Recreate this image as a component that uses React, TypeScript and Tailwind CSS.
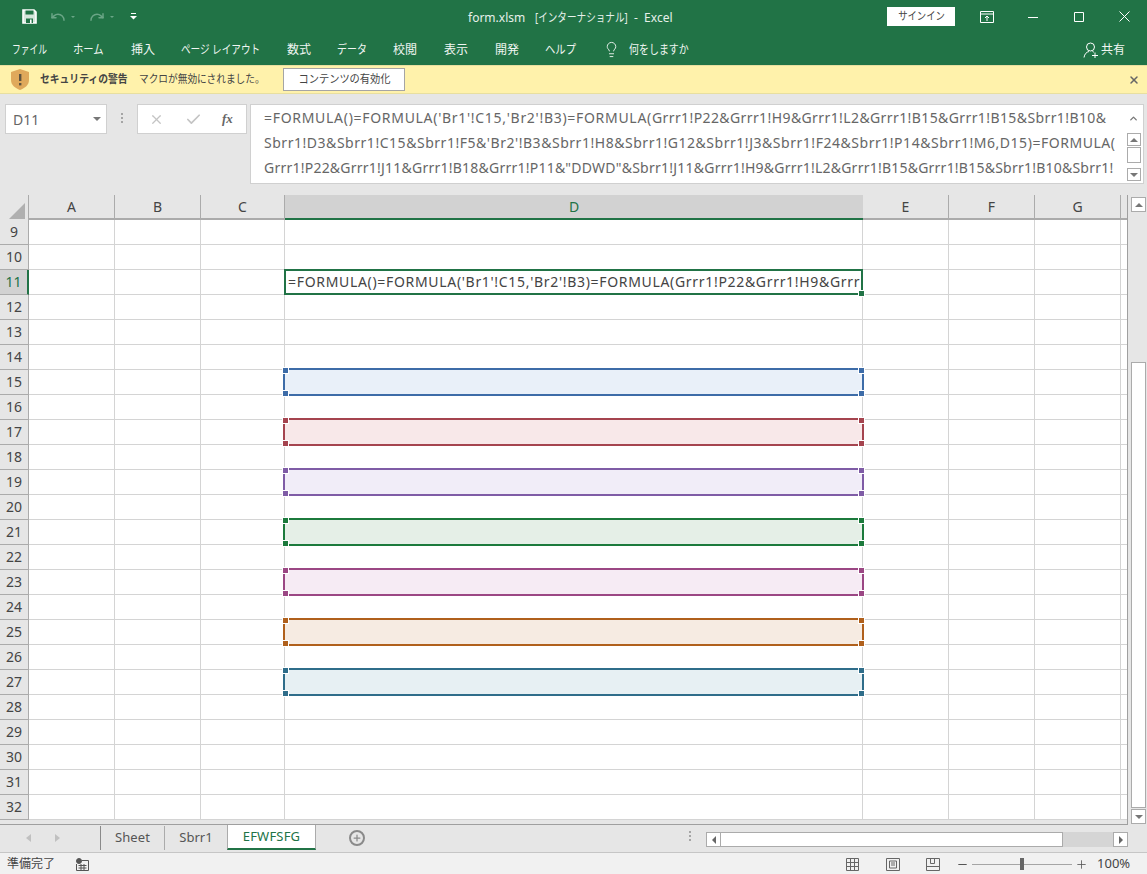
import { Minus, Plus, X, ChevronUp, Check, Undo, Redo, Lightbulb } from "lucide-react";

const font = "font-['Noto_Sans','Noto_Sans_CJK_JP',sans-serif]";

// kana in the reference's UI font runs narrower than in Noto, so labels get squeezed
function Narrow({ text, w, scale }: { text: string; w: string; scale: string }) {
  return (
    <span className={`inline-block whitespace-nowrap ${w}`}>
      <span className={`inline-block origin-left ${scale}`}>{text}</span>
    </span>
  );
}

const menus = [
  { label: "ファイル", w: "w-[61px]", inner: "w-[35px]", scale: "scale-x-[0.73]" },
  { label: "ホーム", w: "w-[58px]", inner: "w-[31px]", scale: "scale-x-[0.86]" },
  { label: "挿入", w: "w-[50px]", inner: "w-[24px]", scale: "scale-x-100" },
  { label: "ページ レイアウト", w: "w-[106px]", inner: "w-[79px]", scale: "scale-x-[0.8]" },
  { label: "数式", w: "w-[50px]", inner: "w-[24px]", scale: "scale-x-100" },
  { label: "データ", w: "w-[56px]", inner: "w-[30px]", scale: "scale-x-[0.83]" },
  { label: "校閲", w: "w-[51px]", inner: "w-[24px]", scale: "scale-x-100" },
  { label: "表示", w: "w-[51px]", inner: "w-[24px]", scale: "scale-x-100" },
  { label: "開発", w: "w-[50px]", inner: "w-[24px]", scale: "scale-x-100" },
  { label: "ヘルプ", w: "w-[56px]", inner: "w-[31px]", scale: "scale-x-[0.86]" },
];

const bands: Record<number, { border: string; fill: string; handle: string }> = {
  15: { border: "border-[#3d6ca8]", fill: "bg-[#e9f0f9]", handle: "bg-[#3d6ca8]" },
  17: { border: "border-[#a5444f]", fill: "bg-[#f8e8e9]", handle: "bg-[#a5444f]" },
  19: { border: "border-[#7f5ca6]", fill: "bg-[#f1edf8]", handle: "bg-[#7f5ca6]" },
  21: { border: "border-[#1c7a3c]", fill: "bg-[#e5efe7]", handle: "bg-[#1c7a3c]" },
  23: { border: "border-[#9b4784]", fill: "bg-[#f6ebf4]", handle: "bg-[#9b4784]" },
  25: { border: "border-[#b0601c]", fill: "bg-[#f6ebe2]", handle: "bg-[#b0601c]" },
  27: { border: "border-[#2f6d8a]", fill: "bg-[#e7f0f3]", handle: "bg-[#2f6d8a]" },
};

const rowNumbers = Array.from({ length: 24 }, (_, i) => i + 9);

const cols = [
  { name: "A", w: "w-[86px]" },
  { name: "B", w: "w-[86px]" },
  { name: "C", w: "w-[84px]" },
  { name: "D", w: "w-[578px]" },
  { name: "E", w: "w-[86px]" },
  { name: "F", w: "w-[86px]" },
  { name: "G", w: "w-[86px]" },
];

function Handle({ className, color }: { className: string; color: string }) {
  return <span className={`absolute h-[7px] w-[7px] border border-white ${color} ${className}`} />;
}

function Band({ row }: { row: number }) {
  const b = bands[row];
  return (
    <div className={`absolute left-[-2px] top-[-2px] z-10 h-[28px] w-[581px] border-2 ${b.border} ${b.fill}`}>
      <Handle color={b.handle} className="left-[-3px] top-[-3px]" />
      <Handle color={b.handle} className="right-[-3px] top-[-3px]" />
      <Handle color={b.handle} className="bottom-[-3px] left-[-3px]" />
      <Handle color={b.handle} className="bottom-[-3px] right-[-3px]" />
    </div>
  );
}

function TitleBar() {
  return (
    <div className="flex h-[33px] items-center bg-[#217346] text-white">
      <div className="flex w-[440px] items-center pl-[22px]">
        <svg width="15" height="15" viewBox="0 0 15 15" fill="none" stroke="#fff" strokeWidth="1.6">
          <path d="M1 1h11l2 2v11H1z" fill="#d5e6dc" stroke="#fff" />
          <path d="M3.5 1.5h8v4h-8z" fill="#217346" stroke="none" />
          <path d="M4 9.5h7V14H4z" fill="#217346" stroke="none" />
          <path d="M8 10.5h1.6V14H8z" fill="#fff" stroke="none" />
        </svg>
        <Undo size={16} strokeWidth={2.2} className="ml-[13px] text-[#6aa586]" />
        <span className="ml-[5px] h-0 w-0 border-x-[2px] border-t-[2px] border-x-transparent border-t-[#6aa586]" />
        <Redo size={16} strokeWidth={2.2} className="ml-[14px] text-[#6aa586]" />
        <span className="ml-[5px] h-0 w-0 border-x-[2px] border-t-[2px] border-x-transparent border-t-[#6aa586]" />
        <svg width="7" height="7" viewBox="0 0 7 7" className="ml-[16px]" fill="#fff">
          <path d="M1 0h5v1H1z" />
          <path d="M0 3h7L3.5 6.5z" />
        </svg>
      </div>
      <div className="flex w-[447px] pl-[28px] pt-[2px] text-[12px] text-[#e6f0ea]">
        <span className="w-[67px]">form.xlsm</span>
        <Narrow text="[インターナショナル]" w="w-[99px]" scale="scale-x-[0.8]" />
        <span>-&nbsp;&nbsp;Excel</span>
      </div>
      <div className="flex h-[19px] w-[68px] items-center justify-center bg-white text-[11px] text-[#444]">
        <span className="scale-x-[0.85]">サインイン</span>
      </div>
      <svg width="14" height="12" viewBox="0 0 14 12" fill="none" stroke="#fff" className="ml-[25px]">
        <path d="M.5.5h13v11H.5zM.5 3h13" />
        <path d="M7 10V5M5 7l2-2 2 2" />
      </svg>
      <svg width="10" height="10" viewBox="0 0 10 10" stroke="#fff" className="ml-[34px]">
        <path d="M0 5.5h10" />
      </svg>
      <svg width="10" height="10" viewBox="0 0 10 10" fill="none" stroke="#fff" className="ml-[36px]">
        <path d="M.5.5h9v9h-9z" />
      </svg>
      <svg width="11" height="11" viewBox="0 0 11 11" stroke="#fff" className="ml-[35px]">
        <path d="M.5.5l10 10M10.5.5l-10 10" />
      </svg>
    </div>
  );
}

function MenuBar() {
  return (
    <div className="flex h-[32px] items-center bg-[#217346] pl-[12px] pt-[1px] text-[12px] text-[#f0f6f2]">
      {menus.map((m) => (
        <div key={m.label} className={m.w}>
          <Narrow text={m.label} w={m.inner} scale={m.scale} />
        </div>
      ))}
      <Lightbulb size={17} strokeWidth={1.3} className="ml-[2px]" />
      <div className="ml-[9px]">
        <Narrow text="何をしますか" w="w-[60px]" scale="scale-x-[0.83]" />
      </div>
      <div className="ml-auto flex items-center pr-[22px]">
        <svg width="16" height="16" viewBox="0 0 16 16" fill="none" stroke="#fff">
          <circle cx="7.5" cy="5" r="4" />
          <path d="M1 15.5c.5-3.5 2.5-5.5 5-6M9.5 9.5c.5.2 1 .4 1.5.8M9 13.5h6M12 10.5v6" />
        </svg>
        <span className="ml-[2px]">共有</span>
      </div>
    </div>
  );
}

function MessageBar() {
  return (
    <div className="flex h-[29px] items-center border-y border-[#e8dfa0] bg-[#fff2ab] text-[11px] text-[#444]">
      <svg width="20" height="21" viewBox="0 0 20 21" className="ml-[10px]">
        <path d="M10 0l9 3v8c0 5-4 8-9 10C5 19 1 16 1 11V3z" fill="#dfa95b" />
        <rect x="9" y="5" width="2.4" height="7" fill="#5d5340" />
        <rect x="9" y="14" width="2.4" height="2.4" fill="#5d5340" />
      </svg>
      <span className="ml-[10px] font-bold">
        <Narrow text="セキュリティの警告" w="w-[88px]" scale="scale-x-[0.89]" />
      </span>
      <span className="ml-[11px]">
        <Narrow text="マクロが無効にされました。" w="w-[121px]" scale="scale-x-[0.88]" />
      </span>
      <div className="ml-[23px] flex h-[23px] w-[122px] items-center justify-center border border-[#a5a5a5] bg-white">
        <span className="scale-x-[0.93]">コンテンツの有効化</span>
      </div>
      <X size={12} strokeWidth={3} className="ml-auto mr-[7px] text-[#666]" />
    </div>
  );
}

function FormulaBar() {
  return (
    <div className="flex h-[101px] items-start bg-[#e6e6e6] pt-[10px]">
      <div className="ml-[5px] flex h-[30px] w-[102px] items-center justify-between border border-[#d0d0d0] bg-white pl-[7px] pr-[5px] text-[14px] text-[#666]">
        <span>D11</span>
        <span className="h-0 w-0 border-x-[4px] border-t-[4px] border-x-transparent border-t-[#777]" />
      </div>
      <div className="ml-[14px] mt-[9px] flex flex-col gap-[2px]">
        <span className="h-[2px] w-[2px] bg-[#a5a5a5]" />
        <span className="h-[2px] w-[2px] bg-[#a5a5a5]" />
        <span className="h-[2px] w-[2px] bg-[#a5a5a5]" />
      </div>
      <div className="ml-[14px] flex h-[30px] w-[110px] items-center border border-[#d0d0d0] bg-white text-[#c4c4c4]">
        <X size={15} strokeWidth={2} className="ml-[11px]" />
        <Check size={17} strokeWidth={2.4} className="ml-[21px]" />
        <span className="ml-[20px] font-['Liberation_Serif',serif] text-[13px] font-bold italic text-[#666]">fx</span>
      </div>
      <div className="ml-[3px] flex h-[80px] w-[894px] border border-[#d0d0d0] bg-white">
        <div className="w-[870px] shrink-0 overflow-hidden pl-[13px] text-[14px] leading-[25px] whitespace-nowrap text-[#666]">
          <div className="tracking-[0.4px]">
            <span className="tracking-[0.7px]">=FORMULA()=FORMULA('Br1'!C15,'Br2'!B3)=FORMULA(</span>
            Grrr1!P22&Grrr1!H9&Grrr1!L2&Grrr1!B15&Grrr1!B15&Sbrr1!B10&
          </div>
          <div className="tracking-[0.53px]">Sbrr1!D3&Sbrr1!C15&Sbrr1!F5&'Br2'!B3&Sbrr1!H8&Sbrr1!G12&Sbrr1!J3&Sbrr1!F24&Sbrr1!P14&Sbrr1!M6,D15)=FORMULA(</div>
          <div className="tracking-[0.23px]">Grrr1!P22&Grrr1!J11&Grrr1!B18&Grrr1!P11&"DDWD"&Sbrr1!J11&Grrr1!H9&Grrr1!L2&Grrr1!B15&Grrr1!B15&Sbrr1!B10&Sbrr1!</div>
        </div>
        <div className="flex flex-1 flex-col items-center pl-[3px]">
          <ChevronUp size={11} strokeWidth={3} className="mt-[8px] text-[#777]" />
          <div className="mt-[9px] flex h-[13px] w-[14px] items-center justify-center border border-[#ababab]">
            <span className="h-0 w-0 border-x-[4px] border-b-[4px] border-x-transparent border-b-[#777]" />
          </div>
          <div className="mt-[1px] h-[16px] w-[14px] border border-[#ababab]" />
          <div className="mt-[5px] flex h-[13px] w-[14px] items-center justify-center border border-[#ababab]">
            <span className="h-0 w-0 border-x-[4px] border-t-[4px] border-x-transparent border-t-[#777]" />
          </div>
        </div>
      </div>
    </div>
  );
}

function Sheet() {
  return (
    <div className="flex h-[630px] bg-[#e6e6e6]">
      <div className="flex w-[1128px] flex-col overflow-hidden border-b border-r border-[#9f9f9f]">
        <div className="flex h-[25px] shrink-0 text-[14px] text-[#444]">
          <div className="relative w-[29px] border-r border-[#ababab]">
            <span className="absolute bottom-[1px] right-[3px] h-0 w-0 border-b-[16px] border-l-[16px] border-b-[#b0b0b0] border-l-transparent" />
          </div>
          {cols.map((c) => (
            <div
              key={c.name}
              className={`${c.w} flex items-center justify-center border-b-2 ${
                c.name === "D"
                  ? "border-[#217346] bg-[#d2d2d2] text-[#217346]"
                  : "border-b-[#ababab] border-r border-r-[#ababab]"
              }`}
            >
              {c.name}
            </div>
          ))}
          <div className="flex-1 border-b-2 border-b-[#ababab]" />
        </div>
        {rowNumbers.map((r) => {
          const active = r === 11;
          return (
            <div key={r} className="flex h-[25px] shrink-0 text-[14px]">
              <div
                className={`flex w-[29px] items-center justify-center border-b border-r border-[#ababab] pb-[2px] ${
                  active ? "border-r-2 border-r-[#217346] bg-[#d2d2d2] text-[#217346]" : "text-[#444]"
                }`}
              >
                {r}
              </div>
              {cols.map((c) => (
                <div key={c.name} className={`${c.w} relative border-b border-r border-[#d4d4d4] bg-white`}>
                  {c.name === "D" && bands[r] && <Band row={r} />}
                  {c.name === "D" && active && (
                    <div className="absolute left-[-1px] top-[-1px] z-10 h-[26px] w-[579px] border-2 border-[#217346] bg-white">
                      <div className="overflow-hidden pl-[2px] text-[14px] leading-[21px] tracking-[0.68px] whitespace-nowrap text-[#444]">
                        =FORMULA()=FORMULA('Br1'!C15,'Br2'!B3)=FORMULA(Grrr1!P22&Grrr1!H9&Grrr
                      </div>
                      <span className="absolute bottom-[-4px] right-[-4px] h-[7px] w-[7px] border border-white bg-[#217346]" />
                    </div>
                  )}
                </div>
              ))}
              <div className="flex-1 border-b border-[#d4d4d4] bg-white" />
            </div>
          );
        })}
      </div>
      <div className="flex w-[19px] flex-col items-center pl-[2px] pt-[2px]">
        <div className="flex h-[15px] w-[15px] items-center justify-center border border-[#ababab] bg-white">
          <span className="h-0 w-0 border-x-[4px] border-b-[4px] border-x-transparent border-b-[#777]" />
        </div>
        <div className="mt-[150px] h-[446px] w-[15px] border border-[#ababab] bg-white" />
        <div className="flex-1" />
        <div className="mb-[1px] flex h-[15px] w-[15px] items-center justify-center border border-[#ababab] bg-white">
          <span className="h-0 w-0 border-x-[4px] border-t-[4px] border-x-transparent border-t-[#777]" />
        </div>
      </div>
    </div>
  );
}

function TabBar() {
  return (
    <div className="flex h-[28px] items-start border-b border-[#c6c6c6] bg-[#e6e6e6] text-[13px] text-[#555]">
      <div className="mt-[1px] flex h-[24px] w-[101px] items-center border-r border-[#8a8a8a] pl-[26px]">
        <span className="h-0 w-0 border-y-[4px] border-r-[5px] border-y-transparent border-r-[#c0c0c0]" />
        <span className="ml-[24px] h-0 w-0 border-y-[4px] border-l-[5px] border-y-transparent border-l-[#c0c0c0]" />
      </div>
      <div className="mt-[1px] flex h-[24px] w-[64px] items-center justify-center border-r border-[#ababab] tracking-[0.1px]">Sheet</div>
      <div className="mt-[1px] flex h-[24px] w-[62px] items-center justify-center">Sbrr1</div>
      <div className="flex h-[25px] w-[89px] items-center justify-center border-x border-b-2 border-x-[#ababab] border-b-[#217346] bg-white tracking-[0.2px] text-[#217346]">EFWFSFG</div>
      <div className="ml-[33px] mt-[5px] flex h-[16px] w-[16px] items-center justify-center rounded-full border-2 border-[#8a8a8a]">
        <Plus size={10} strokeWidth={3} className="text-[#8a8a8a]" />
      </div>
      <div className="ml-[324px] mt-[6px] flex flex-col gap-[2px]">
        <span className="h-[2px] w-[2px] bg-[#a5a5a5]" />
        <span className="h-[2px] w-[2px] bg-[#a5a5a5]" />
        <span className="h-[2px] w-[2px] bg-[#a5a5a5]" />
      </div>
      <div className="ml-[15px] mt-[7px] flex h-[15px] w-[422px] bg-[#d5d5d5]">
        <div className="flex w-[15px] items-center justify-center border border-[#ababab] bg-white">
          <span className="h-0 w-0 border-y-[4px] border-r-[4px] border-y-transparent border-r-[#666]" />
        </div>
        <div className="w-[342px] border-y border-r border-[#ababab] bg-white" />
        <div className="flex-1" />
        <div className="flex w-[15px] items-center justify-center border border-[#ababab] bg-white">
          <span className="h-0 w-0 border-y-[4px] border-l-[4px] border-y-transparent border-l-[#666]" />
        </div>
      </div>
    </div>
  );
}

function StatusBar() {
  return (
    <div className="flex h-[22px] items-center bg-[#f1f1f1] text-[12px] text-[#444]">
      <span className="ml-[7px]">準備完了</span>
      <svg width="13" height="13" viewBox="0 0 13 13" className="ml-[21px]" fill="none" stroke="#555">
        <circle cx="3" cy="3" r="2.5" fill="#555" />
        <path d="M6 2.5h6.5v10H.5V6M2.5 7.5h8M2.5 10h8M5 6v6M8 6v6" />
      </svg>
      <svg width="13" height="13" viewBox="0 0 13 13" className="ml-[757px]" fill="none" stroke="#666">
        <path d="M.5.5h12v12H.5zM4.5.5v12M8.5.5v12M.5 4.5h12M.5 8.5h12" />
      </svg>
      <svg width="14" height="13" viewBox="0 0 14 13" className="ml-[27px]" fill="none" stroke="#666">
        <path d="M.5.5h13v12H.5zM3.5 3h7v7h-7zM5 5h4M5 7h4" />
      </svg>
      <svg width="14" height="13" viewBox="0 0 14 13" className="ml-[26px]" fill="none" stroke="#666">
        <path d="M.5.5h13v12H.5zM.5 8.5h13M4.5.5v5h4V.5" />
      </svg>
      <Minus size={13} strokeWidth={2} className="ml-[16px] text-[#555]" />
      <div className="relative ml-[3px] flex h-[12px] w-[100px] items-center">
        <div className="h-[1px] w-full bg-[#a5a5a5]" />
        <span className="absolute left-[48px] top-0 h-[12px] w-[4px] bg-[#666]" />
      </div>
      <Plus size={13} strokeWidth={1.5} className="ml-[3px] text-[#555]" />
      <span className="ml-[9px] text-[13px]">100%</span>
    </div>
  );
}

export default function App() {
  return (
    <div className={`h-[874px] w-[1147px] overflow-hidden ${font}`}>
      <TitleBar />
      <MenuBar />
      <MessageBar />
      <FormulaBar />
      <Sheet />
      <TabBar />
      <StatusBar />
    </div>
  );
}
